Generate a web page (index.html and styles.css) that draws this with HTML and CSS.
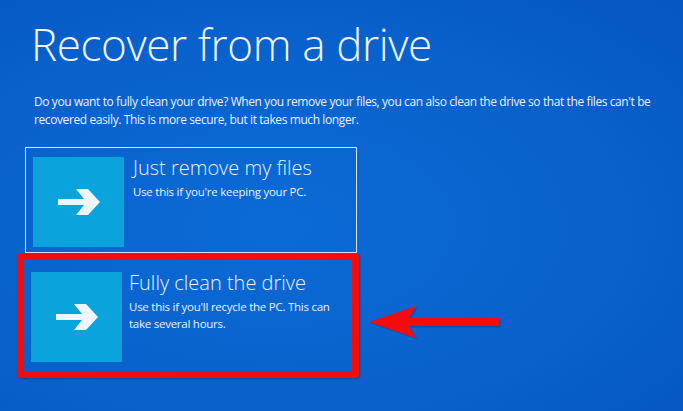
FILE: index.html
```html
<!DOCTYPE html>
<html>
<head>
<meta charset="utf-8">
<link rel="stylesheet" href="styles.css">
</head>
<body>
<main class="screen">
  <h1 class="title">Recover from a drive</h1>
  <p class="intro">Do you want to fully clean your drive? When you remove your files, you can also clean the drive so that the files can't be recovered easily. This is more secure, but it takes much longer.</p>
  <div class="options">
    <div class="option option-plain">
      <div class="tile">
        <svg class="tile-arrow" viewBox="0 0 46 32" width="46" height="32"><path d="M2 13 H28 L20 3 H32 L44 16 L32 29 H20 L28 19 H2 Z" fill="#eef5fb"/></svg>
      </div>
      <div class="option-text">
        <div class="option-title">Just remove my files</div>
        <div class="option-desc">Use this if you're keeping your PC.</div>
      </div>
    </div>
    <div class="option option-marked">
      <div class="tile">
        <svg class="tile-arrow" viewBox="0 0 46 32" width="46" height="32"><path d="M2 13 H28 L20 3 H32 L44 16 L32 29 H20 L28 19 H2 Z" fill="#eef5fb"/></svg>
      </div>
      <div class="option-text">
        <div class="option-title">Fully clean the drive</div>
        <div class="option-desc">Use this if you'll recycle the PC. This can take several hours.</div>
      </div>
    </div>
  </div>
  <svg class="pointer" viewBox="0 0 136 36" width="136" height="36">
    <path d="M2 18 L49 2 L42 14 H132 V22 H42 L49 34 Z" fill="#1a2a6a" opacity="0.35" transform="translate(1.5,1.5)"/>
    <path d="M2 18 L49 2 L42 14 H132 V22 H42 L49 34 Z" fill="#f40b0b"/>
  </svg>
</main>
</body>
</html>
```
FILE: styles.css
```css
html, body {
  margin: 0;
  padding: 0;
}
body {
  width: 683px;
  height: 411px;
  overflow: hidden;
}
.screen {
  position: relative;
  width: 683px;
  height: 411px;
  box-sizing: border-box;
  padding: 14px 0 0 0;
  background: radial-gradient(ellipse at 40% 55%, #0b6ad6 0%, #0962cc 55%, #0556c0 100%);
  color: #f2f6fb;
  font-family: "Open Sans", "Noto Sans", sans-serif;
}
.title {
  margin: 0 0 0 31px;
  font-weight: 300;
  font-size: 44px;
  line-height: 60px;
  letter-spacing: -0.4px;
  color: #eef3fa;
}
.intro {
  margin: 19px 0 0 34px;
  width: 630px;
  font-size: 12px;
  line-height: 18px;
  letter-spacing: -0.4px;
  color: #eaf1fa;
}
.options {
  margin: 18px 0 0 17px;
  display: flex;
  flex-direction: column;
  align-items: flex-start;
}
.option {
  display: flex;
  box-sizing: border-box;
}
.option-plain {
  margin-left: 8px;
  width: 332px;
  height: 106px;
  border: 1.5px solid #d9e4f3;
  padding: 9px 0 0 7px;
  gap: 9px;
}
.option-marked {
  width: 342px;
  height: 125px;
  border: 7px solid #f40b0b;
  border-radius: 4px;
  padding: 12px 0 0 7px;
  gap: 7px;
  box-shadow: 1px 1px 2px rgba(10, 20, 60, 0.35);
}
.tile {
  flex: none;
  width: 91px;
  height: 90px;
  background: #0aa3dc;
  display: flex;
  align-items: center;
  justify-content: center;
}
.option-title {
  font-weight: 300;
  font-size: 20px;
  line-height: 24px;
  margin-top: -1px;
  color: #eef3fa;
}
.option-desc {
  margin-top: 3px;
  font-size: 11.5px;
  line-height: 17px;
  letter-spacing: -0.25px;
  width: 212px;
  color: #eaf1fa;
}
.pointer {
  position: absolute;
  left: 367px;
  top: 304px;
}
```
